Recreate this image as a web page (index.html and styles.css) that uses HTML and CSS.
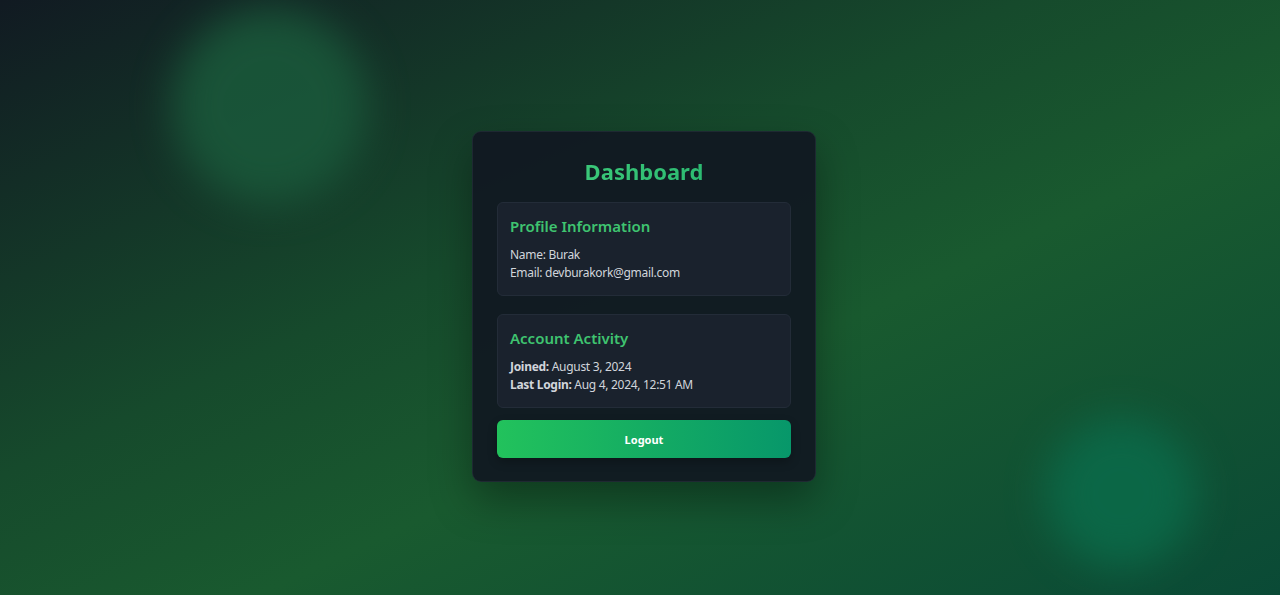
FILE: index.html
```html
<!DOCTYPE html>
<html lang="en">
<head>
<meta charset="utf-8">
<title>Dashboard</title>
<link rel="stylesheet" href="styles.css">
</head>
<body>
<div class="page">
  <div class="blob blob-green"></div>
  <div class="blob blob-emerald"></div>
  <div class="card">
    <h2 class="title">Dashboard</h2>
    <div class="sections">
      <section class="panel">
        <h3 class="panel-title">Profile Information</h3>
        <p class="line">Name: Burak</p>
        <p class="line">Email: devburakork@gmail.com</p>
      </section>
      <section class="panel">
        <h3 class="panel-title">Account Activity</h3>
        <p class="line"><span class="label">Joined:</span> August 3, 2024</p>
        <p class="line"><span class="label">Last Login:</span> Aug 4, 2024, 12:51 AM</p>
      </section>
    </div>
    <button class="logout">Logout</button>
  </div>
</div>
</body>
</html>
```

FILE: styles.css
```css
* { box-sizing: border-box; }
html, body { margin: 0; height: 100%; }
body {
  font-family: "Noto Sans", "Open Sans", sans-serif;
  overflow: hidden;
}
.page {
  position: relative;
  width: 1280px;
  height: 595px;
  overflow: hidden;
  display: flex;
  align-items: center;
  justify-content: center;
  background: linear-gradient(to bottom right, #111a22 0%, #164a2c 40%, #195a2f 60%, #0a4a36 100%);
}
.blob {
  position: absolute;
  border-radius: 50%;
  filter: blur(20px);
}
.blob-green {
  left: 172px;
  top: 8px;
  width: 196px;
  height: 196px;
  background: #1a5a3b;
  opacity: 0.85;
}
.blob-emerald {
  left: 1046px;
  top: 418px;
  width: 150px;
  height: 150px;
  background: #0b6a49;
  opacity: 0.9;
}
.card {
  position: relative;
  width: 344px;
  margin-top: 18px;
  margin-left: 8px;
  padding: 25px 24px 23px;
  background: rgba(17, 24, 33, 0.93);
  border: 1px solid rgba(40, 52, 62, 0.6);
  border-radius: 9px;
  box-shadow: 0 18px 40px rgba(0, 0, 0, 0.35);
  display: flex;
  flex-direction: column;
}
.title {
  margin: 0 0 17px;
  text-align: center;
  font-size: 22px;
  line-height: 28px;
  font-weight: 700;
  color: #3cc277;
  background: linear-gradient(to right, #45d27e, #22b06c);
  -webkit-background-clip: text;
  background-clip: text;
  -webkit-text-fill-color: transparent;
}
.sections {
  display: flex;
  flex-direction: column;
  gap: 18px;
}
.panel {
  padding: 12px 12px 13px;
  background: #1a222d;
  border: 1px solid #232c38;
  border-radius: 6px;
}
.panel-title {
  margin: 0 0 9px;
  font-size: 15px;
  line-height: 22px;
  font-weight: 600;
  color: #3fc470;
}
.line {
  margin: 0;
  font-size: 12px;
  line-height: 18px;
  color: #d1d5db;
  letter-spacing: -0.3px;
}
.label { font-weight: 700; }
.logout {
  margin-top: 12px;
  height: 38px;
  border: none;
  border-radius: 6px;
  background: linear-gradient(to right, #22c25c, #07976a);
  color: #ffffff;
  font-family: inherit;
  font-size: 11px;
  font-weight: 700;
  box-shadow: 0 4px 10px rgba(0, 0, 0, 0.25);
}
```
